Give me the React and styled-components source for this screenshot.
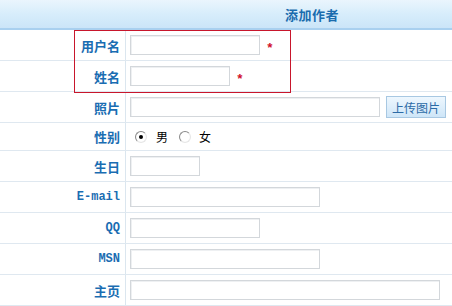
import React from "react";
import styled, { createGlobalStyle } from "styled-components";

const Global = createGlobalStyle`
  html, body { margin: 0; padding: 0; background: #fff; overflow: hidden; }
  body { font-family: "Noto Sans CJK SC", "Liberation Sans", sans-serif; font-size: 12px; }
`;

const Form = styled.div`
  position: relative;
  width: 100%;
`;

const Header = styled.div`
  height: 28px;
  background: linear-gradient(to bottom, #eaf5fd 0%, #d7edfb 50%, #cbe5f8 100%);
  border-bottom: 2px solid #a9d0ef;
  display: grid;
  grid-template-columns: 126px 1fr;
  align-items: center;
`;

const Title = styled.div`
  grid-column: 2;
  text-align: center;
  padding-left: 46px;
  font-weight: bold;
  font-size: 13px;
  color: #1a6cae;
  letter-spacing: 0.5px;
`;

const Row = styled.div`
  display: grid;
  grid-template-columns: 126px 1fr;
  border-bottom: 1px solid #dfe8f0;
  height: ${(p) => p.$h || 30}px;
`;

const Label = styled.div`
  border-right: 1px solid #dbe6ef;
  display: flex;
  align-items: center;
  justify-content: flex-end;
  padding-right: 5px;
  font-weight: bold;
  font-size: ${(p) => (p.$mono ? 12 : 13)}px;
  color: #1a6db2;
  font-family: ${(p) => (p.$mono ? '"Liberation Mono", monospace' : '"Noto Sans CJK SC", sans-serif')};
`;

const Cell = styled.div`
  display: flex;
  align-items: center;
  padding-left: 4px;
`;

const TextInput = styled.input`
  box-sizing: border-box;
  width: ${(p) => p.$w}px;
  height: 20px;
  border: 1px solid #d3d7db;
  box-shadow: inset 1px 1px 0 #eef0f2;
  background: #fff;
  margin: 0;
  padding: 0 3px;
  outline: none;
`;

const Required = styled.span`
  color: #d0102a;
  font-family: "Liberation Mono", monospace;
  font-weight: bold;
  font-size: 13px;
  margin-left: 6px;
  margin-top: 6px;
`;

const UploadButton = styled.button`
  box-sizing: border-box;
  margin-left: 6px;
  width: 60px;
  height: 22px;
  padding: 0;
  border: 1px solid #a8c8e2;
  background: linear-gradient(to bottom, #eef7fe 0%, #cfe6f8 100%);
  color: #2c6aa6;
  font-family: "Noto Sans CJK SC", sans-serif;
  font-size: 12px;
`;

const Radio = styled.input.attrs({ type: "radio" })`
  appearance: none;
  box-sizing: border-box;
  width: 12px;
  height: 12px;
  margin: 0 0 0 ${(p) => p.$ml || 0}px;
  border-radius: 50%;
  border: 1px solid;
  border-color: #8a8a8a #e6e6e6 #e6e6e6 #8a8a8a;
  background: radial-gradient(circle, #fff 55%, #f0f0f0 100%);
  position: relative;
  &:checked::after {
    content: "";
    position: absolute;
    left: 3px;
    top: 3px;
    width: 4px;
    height: 4px;
    border-radius: 50%;
    background: #000;
  }
`;

const RadioText = styled.span`
  color: #000;
  font-size: 12px;
  margin-left: ${(p) => p.$ml || 0}px;
`;

const Highlight = styled.div`
  position: absolute;
  left: 74px;
  top: 30px;
  width: 217px;
  height: 63px;
  box-sizing: border-box;
  border: 1px solid #c8162c;
  pointer-events: none;
`;

const inputRows = [
  { label: "生日", w: 70 },
  { label: "E-mail", w: 190, mono: true },
  { label: "QQ", w: 130, mono: true },
  { label: "MSN", w: 190, mono: true },
  { label: "主页", w: 310 },
];

export default function App() {
  return (
    <>
      <Global />
      <Form>
        <Header>
          <Title>添加作者</Title>
        </Header>
        <Row>
          <Label>用户名</Label>
          <Cell>
            <TextInput $w={130} />
            <Required>*</Required>
          </Cell>
        </Row>
        <Row>
          <Label>姓名</Label>
          <Cell>
            <TextInput $w={100} />
            <Required>*</Required>
          </Cell>
        </Row>
        <Row>
          <Label>照片</Label>
          <Cell>
            <TextInput $w={250} />
            <UploadButton>上传图片</UploadButton>
          </Cell>
        </Row>
        <Row $h={27}>
          <Label>性别</Label>
          <Cell>
            <Radio name="sex" defaultChecked $ml={5} />
            <RadioText $ml={9}>男</RadioText>
            <Radio name="sex" $ml={11} />
            <RadioText $ml={8}>女</RadioText>
          </Cell>
        </Row>
        {inputRows.map((f) => (
          <Row key={f.label}>
            <Label $mono={f.mono}>{f.label}</Label>
            <Cell>
              <TextInput $w={f.w} />
            </Cell>
          </Row>
        ))}
        <Highlight />
      </Form>
    </>
  );
}
